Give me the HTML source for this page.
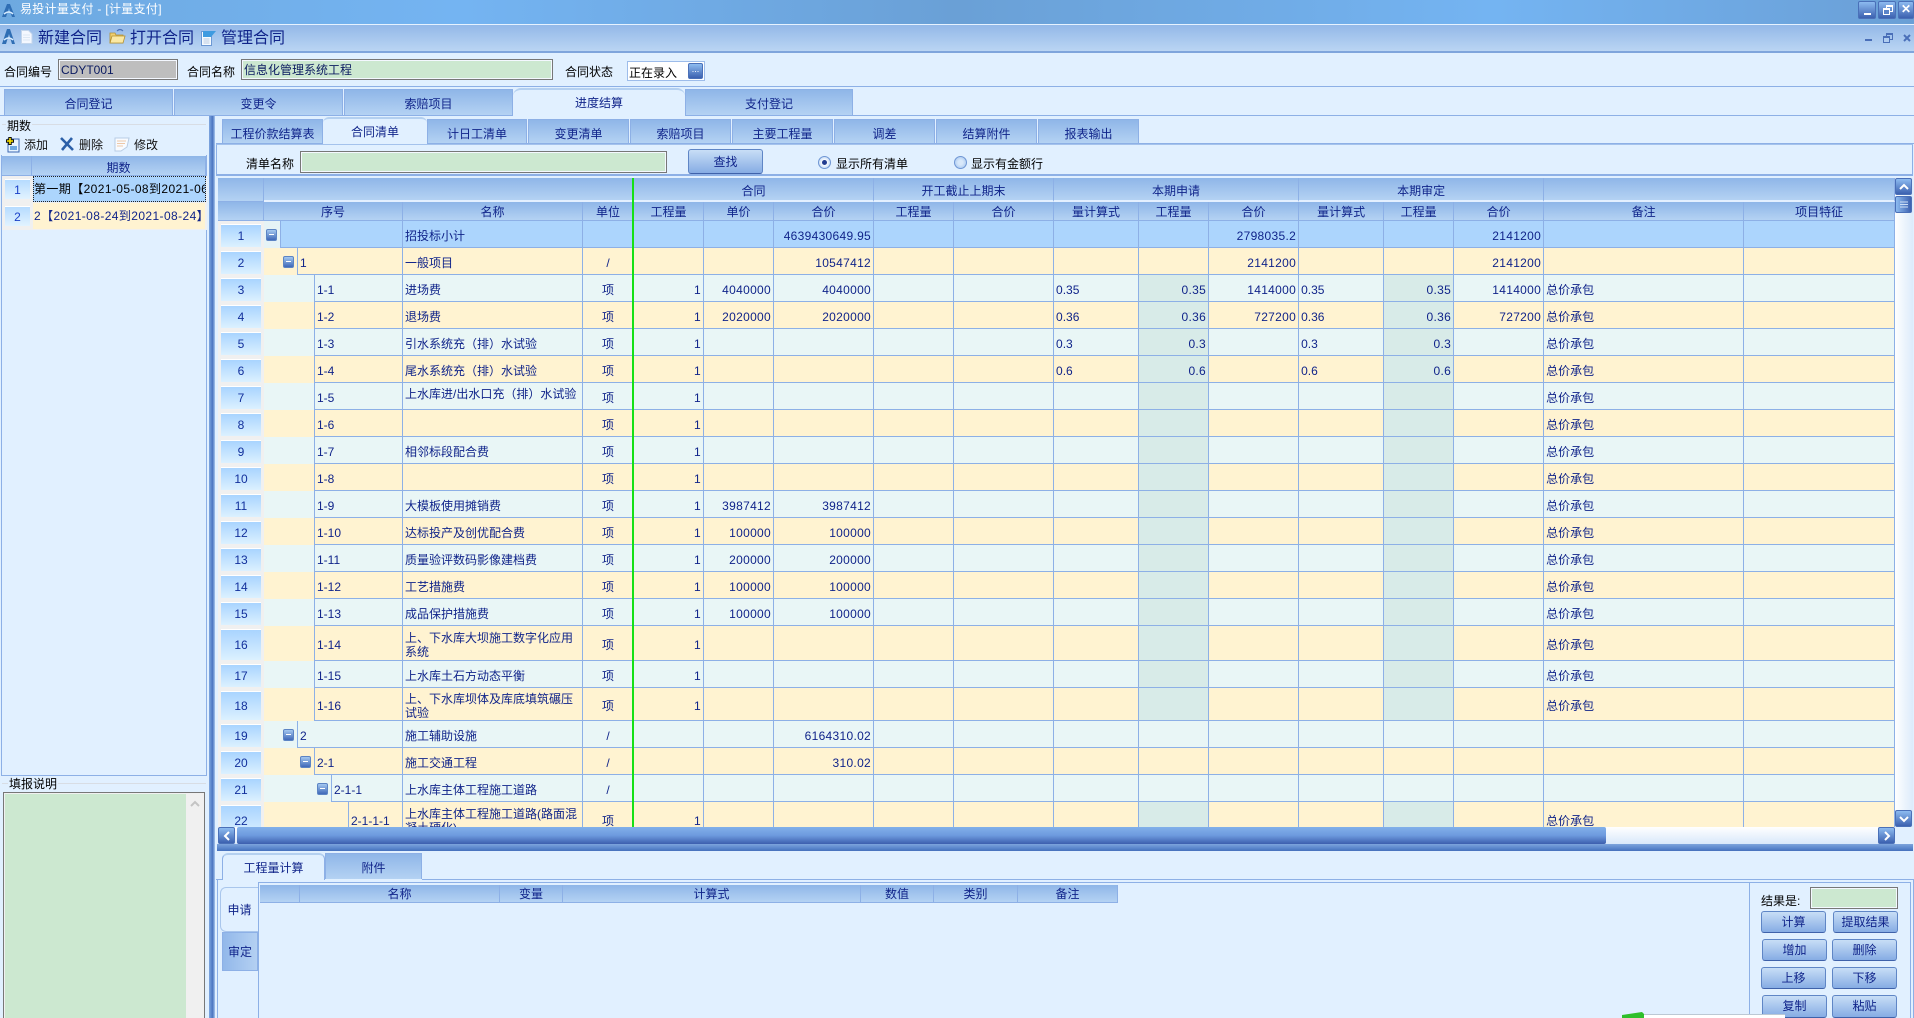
<!DOCTYPE html>
<html lang="zh"><head><meta charset="utf-8"><title>易投计量支付</title>
<style>
*{box-sizing:border-box}
html,body{margin:0;padding:0;width:1914px;height:1018px;overflow:hidden;background:#e1f0ff}
body{position:relative;font:12px/14px "Liberation Sans","WenQuanYi Zen Hei","Noto Sans CJK SC",sans-serif;color:#000}
.a{position:absolute;white-space:nowrap}
.ln{position:absolute;background:#8db0e6}
.inp{position:absolute;border:1px solid #777;outline:1px solid #f4f8ff;outline-offset:-2px;background:#cce8d0;padding:3px 2px 1px;color:#0a1a60}
.tab{position:absolute;top:89px;height:26px;border:1px solid #8db0e6;border-bottom:0;background:linear-gradient(#8fb6e8,#b4d2f3);color:#10248a;text-align:center;line-height:29px}
.st{top:119px;height:24px;line-height:28px}
.act{background:#e1f0ff;border-bottom:0;z-index:2}
.btn{position:absolute;border:1px solid #5f86c6;border-bottom-color:#3f62aa;border-radius:3px;background:linear-gradient(#c8def6,#86ace4);color:#10248a;text-align:center;line-height:21px}
.sb{position:absolute;border-radius:2px;background:linear-gradient(#8dbbf0,#3c61b0);border:1px solid #4a70b8}
#g{position:absolute;left:218px;top:178px;width:1677px;height:649px;overflow:hidden}
table{border-collapse:separate;border-spacing:0;table-layout:fixed;width:1677px}
td,th{padding:3px 2px 0;border-right:1px solid #8db0e6;border-bottom:1px solid #8db0e6;height:27px;overflow:hidden;color:#10248a;font-weight:normal;line-height:14px;white-space:nowrap}
th{background:linear-gradient(#8fb6e8,#b4d2f3);text-align:center;padding:2px 0 0}
tr.h1 th{height:24px;border-bottom:2px solid #e4f0ff;padding-top:4px}
tr.h2 th{height:19px}
tr.o td{background:#e9f6f6}
tr.e td{background:#fff3d1}
tr.b td{background:#acd5fd}
td.r{text-align:right;letter-spacing:.3px}
td.c{text-align:center}
tr td.s{background:#d8ebe8}
tr td.k,tr.h1 th.k,tr.h2 th.k{background:#f0f0f0;border:0;padding:3px 3px 1px 3px}
th.k{background:linear-gradient(#8fb6e8,#b4d2f3)!important;border-right:1px solid #8db0e6!important;border-bottom:1px solid #8db0e6!important}
td.k div{height:100%;border-top:1px solid #fff;background:linear-gradient(#a9d4ff,#dcf1ff);text-align:center;color:#12309c;display:flex;align-items:center;justify-content:center}
td.i{border-bottom:0;text-align:right;padding:1px 3px 0 0;vertical-align:middle;font-size:0;line-height:0}
tr.b td.i{background:#e6f3f6}
.x{display:inline-block;width:11px;height:12px;border-radius:2px;background:linear-gradient(#a4c8f0,#3f68b8);border:1px solid #5c84c4;position:relative;vertical-align:middle}
.x:after{content:"";position:absolute;left:2px;top:4px;width:5px;height:1px;background:#fff}
.col{background:linear-gradient(#8fb6e8,#b4d2f3);border-right:1px solid #8db0e6;border-bottom:1px solid #8db0e6;color:#10248a;text-align:center;line-height:21px;position:absolute}
</style></head><body>

<!-- title bar -->
<div class="a" style="left:0;top:0;width:1914px;height:24px;background:linear-gradient(90deg,#6ea9e0,#74b4f2 24%,#6aa0d6 50%,#74b4f2 78%,#6a9fd6)"></div>
<div class="a" style="left:0;top:24px;width:1914px;height:1px;background:#e6f2ff"></div>
<svg class="a" style="left:1px;top:3px" width="15" height="15" viewBox="0 0 15 15"><path d="M1 14 6 1h3l5 13h-3L8 5 5 14z" fill="#2f6eb4"/><path d="M3 11q5-4 9 0" fill="none" stroke="#d8ecff" stroke-width="1.5"/></svg>
<div class="a" style="left:20px;top:2px;color:#fff;font-size:12px;letter-spacing:.3px">易投计量支付 - [计量支付]</div>
<div class="sb" style="left:1858px;top:1px;width:18px;height:18px"><div class="a" style="left:5px;top:11px;width:7px;height:2px;background:#fff"></div></div>
<div class="sb" style="left:1878px;top:1px;width:18px;height:18px"><div class="a" style="left:7px;top:3px;width:7px;height:7px;border:1px solid #fff;border-top-width:2px"></div><div class="a" style="left:4px;top:6px;width:7px;height:7px;border:1px solid #fff;border-top-width:2px;background:#5c84c8"></div></div>
<div class="sb" style="left:1898px;top:1px;width:16px;height:18px;color:#fff;font-weight:bold;text-align:center;line-height:15px">✕</div>

<!-- menu bar -->
<div class="a" style="left:0;top:25px;width:1914px;height:26px;background:linear-gradient(#93b8e8,#bad5f3)"></div>
<div class="a" style="left:0;top:51px;width:1914px;height:2px;background:#7fa5dc"></div>
<svg class="a" style="left:1px;top:28px" width="15" height="17" viewBox="0 0 15 17"><path d="M1 16 6 1h3l5 15h-3L8 6 5 16z" fill="#2f6eb4"/><path d="M3 12q5-4 9 0" fill="none" stroke="#d8ecff" stroke-width="1.5"/></svg>
<svg class="a" style="left:20px;top:30px" width="13" height="14" viewBox="0 0 13 14"><path d="M1.500.5h7l3.500 3.500v9.500h-10.500z" fill="#f4f8ff" stroke="#c4d6ec"/><path d="M3 5h7M3 7.500h7M3 10h7" stroke="#dde8f4"/></svg>
<svg class="a" style="left:109px;top:28px" width="17" height="16" viewBox="0 0 17 16"><path d="M1 5h5l1 2h7v8H1z" fill="#f0d070" stroke="#b49030" stroke-width=".8"/><path d="M3 8h13l-2 7H1z" fill="#fbe9a4" stroke="#b49030" stroke-width=".8"/><path d="M8 3q3-3 6 0" fill="none" stroke="#4a70b8" stroke-width="1.200"/></svg>
<svg class="a" style="left:200px;top:30px" width="17" height="16" viewBox="0 0 17 16"><path d="M1.500 1.500h10v14h-10z" fill="#f6fbff" stroke="#6c98d4"/><path d="M3 1h13l-5 6H3z" fill="#3f9be0"/><path d="M3.500 9h6M3.500 11h6M3.500 13h6" stroke="#b8c8e0"/></svg>
<div class="a" style="left:38px;top:30px;font-size:16px;line-height:17px;color:#10248a">新建合同</div>
<div class="a" style="left:130px;top:30px;font-size:16px;line-height:17px;color:#10248a">打开合同</div>
<div class="a" style="left:221px;top:30px;font-size:16px;line-height:17px;color:#10248a">管理合同</div>
<div class="a" style="left:1865px;top:39px;width:7px;height:2px;background:#4a6fb8"></div>
<div class="a" style="left:1886px;top:33px;width:7px;height:7px;border:1px solid #4a6fb8;border-top-width:2px"></div>
<div class="a" style="left:1883px;top:36px;width:7px;height:7px;border:1px solid #4a6fb8;border-top-width:2px;background:#b0cdf0"></div>
<svg class="a" style="left:1903px;top:34px" width="8" height="8"><path d="M1 1l6 6M7 1l-6 6" stroke="#4a6fb8" stroke-width="2"/></svg>

<!-- form row -->
<div class="a" style="left:4px;top:65px">合同编号</div>
<div class="inp" style="left:58px;top:59px;width:120px;height:21px;background:#bebebe">CDYT001</div>
<div class="a" style="left:187px;top:65px">合同名称</div>
<div class="inp" style="left:241px;top:59px;width:312px;height:21px">信息化管理系统工程</div>
<div class="a" style="left:565px;top:65px">合同状态</div>
<div class="a" style="left:627px;top:61px;width:78px;height:20px;background:#fff;border:1px solid #9dbcea;padding:4px 1px 0">正在录入</div>
<div class="sb" style="left:688px;top:63px;width:15px;height:16px;color:#fff;line-height:10px;text-align:center;font-size:9px">...</div>
<div class="ln" style="left:0;top:86px;width:1914px;height:1px"></div>

<!-- main tabs -->
<div class="tab" style="left:4px;width:169px">合同登记</div>
<div class="tab" style="left:174px;width:169px">变更令</div>
<div class="tab" style="left:344px;width:169px">索赔项目</div>
<div class="tab act" style="left:513px;top:88px;width:172px;height:28px;border:0;border-top:2px solid #b4d0f0;border-radius:8px 8px 0 0;color:#10248a;line-height:27px">进度结算</div>
<div class="tab" style="left:685px;width:168px">支付登记</div>
<div class="ln" style="left:0;top:115px;width:513px;height:1px"></div>
<div class="ln" style="left:685px;top:115px;width:1229px;height:1px"></div>

<!-- left panel -->
<div class="a" style="left:2px;top:124px;width:204px;height:1px;background:#d8dde4"></div>
<div class="a" style="left:6px;top:119px;background:#e1f0ff;padding:0 1px;">期数</div>
<svg class="a" style="left:6px;top:137px" width="15" height="16" viewBox="0 0 15 16"><path d="M2 2h11v13H2z" fill="#e8f4ff" stroke="#3a66b0"/><path d="M4 9h7v4H4z" fill="#6fa8e0"/><path d="M4 0v8M0 4h8" stroke="#111" stroke-width="3.500"/><path d="M4 1v6M1 4h6" stroke="#ffe800" stroke-width="1.600"/></svg>
<div class="a" style="left:24px;top:138px;color:#111">添加</div>
<svg class="a" style="left:60px;top:137px" width="14" height="14" viewBox="0 0 14 14"><path d="M1 1l12 12M12 1L2 13" stroke="#2c60a8" stroke-width="2.600"/></svg>
<div class="a" style="left:79px;top:138px;color:#111">删除</div>
<svg class="a" style="left:114px;top:137px" width="16" height="15" viewBox="0 0 16 15"><path d="M1 1h14l-2 9-6 4H1z" fill="#f8fbff" stroke="#b8cce4"/><path d="M3 4h9M3 6.500h8M3 9h6" stroke="#eec8a8"/></svg>
<div class="a" style="left:134px;top:138px;color:#111">修改</div>

<div class="a" style="left:1px;top:155px;width:206px;height:621px;border:1px solid #8db0e6;border-top:0"></div>
<div class="col" style="left:2px;top:156px;width:30px;height:20px"></div>
<div class="col" style="left:32px;top:156px;width:174px;height:20px;line-height:24px">期数</div>
<div class="a" style="left:2px;top:176px;width:205px;height:54px;background:#f0f0f0"></div>
<div class="a" style="left:5px;top:179px;width:25px;height:20px;background:linear-gradient(#b6dbff,#e2f3ff);border-top:1px solid #fff;color:#1a40c8;text-align:center;line-height:20px">1</div>
<div class="a" style="left:33px;top:176px;width:173px;height:26px;background:#acd5fd;border:1px dotted #222;line-height:24px;overflow:hidden;padding-left:0;color:#000;letter-spacing:.4px">第一期【2021-05-08到2021-06</div>
<div class="a" style="left:5px;top:206px;width:25px;height:20px;background:linear-gradient(#b6dbff,#e2f3ff);border-top:1px solid #fff;color:#1a40c8;text-align:center;line-height:20px">2</div>
<div class="a" style="left:33px;top:203px;width:172px;height:26px;background:#fff3d1;line-height:26px;padding-left:1px;overflow:hidden;color:#10248a;letter-spacing:.4px">2【2021-08-24到2021-08-24】</div>

<div class="a" style="left:2px;top:783px;width:204px;height:1px;background:#d8dde4"></div>
<div class="a" style="left:8px;top:777px;background:#e1f0ff;padding:0 1px">填报说明</div>
<div class="a" style="left:3px;top:792px;width:202px;height:226px;border:1px solid #777;background:#f0f0f0;border-bottom:0"></div>
<div class="a" style="left:5px;top:794px;width:181px;height:224px;background:#cce8d0"></div>
<svg class="a" style="left:190px;top:800px" width="10" height="7"><path d="M1 6l4-4 4 4" fill="none" stroke="#c4c4c4" stroke-width="2"/></svg>

<!-- vertical splitter -->
<div class="a" style="left:209px;top:116px;width:6px;height:902px;background:linear-gradient(90deg,#7fa8e0,#4a74c0 60%,#a8c6ee)"></div>

<!-- sub tabs -->
<div class="tab st" style="left:222px;width:101px">工程价款结算表</div>
<div class="tab st act" style="left:323px;top:117px;width:104px;height:27px;border:0;border-top:2px solid #b4d0f0;border-radius:6px 6px 0 0;line-height:27px">合同清单</div>
<div class="tab st" style="left:427px;width:100px">计日工清单</div>
<div class="tab st" style="left:528px;width:101px">变更清单</div>
<div class="tab st" style="left:630px;width:101px">索赔项目</div>
<div class="tab st" style="left:732px;width:101px">主要工程量</div>
<div class="tab st" style="left:834px;width:101px">调差</div>
<div class="tab st" style="left:936px;width:101px">结算附件</div>
<div class="tab st" style="left:1038px;width:101px">报表输出</div>
<div class="ln" style="left:216px;top:143px;width:107px;height:1px"></div>
<div class="ln" style="left:427px;top:143px;width:1487px;height:1px"></div>
<div class="a" style="left:216px;top:144px;width:1697px;height:32px;border:1px solid #8db0e6;border-bottom:2px solid #8db0e6;border-top:1px solid #a4c2ec"></div>

<!-- search row -->
<div class="a" style="left:246px;top:157px">清单名称</div>
<div class="inp" style="left:300px;top:151px;width:367px;height:22px"></div>
<div class="btn" style="left:688px;top:149px;width:75px;height:25px;line-height:24px">查找</div>
<div class="a" style="left:818px;top:156px;width:13px;height:13px;border-radius:50%;background:radial-gradient(#fff 30%,#a4c6f0);border:1px solid #6f96d4"><div class="a" style="left:3px;top:3px;width:5px;height:5px;border-radius:50%;background:#223c90"></div></div>
<div class="a" style="left:836px;top:157px">显示所有清单</div>
<div class="a" style="left:954px;top:156px;width:13px;height:13px;border-radius:50%;background:radial-gradient(#d8e8fa 30%,#9cc0ee);border:1px solid #6f96d4"></div>
<div class="a" style="left:971px;top:157px">显示有金额行</div>

<!-- grid -->
<div id="g"><table style="width:1677px">
<colgroup><col width="46"><col width="17"><col width="17"><col width="17"><col width="17"><col width="17"><col width="54"><col width="180"><col width="51"><col width="70"><col width="70"><col width="100"><col width="80"><col width="100"><col width="85"><col width="70"><col width="90"><col width="85"><col width="70"><col width="90"><col width="200"><col width="151"></colgroup>
<tr class="h1"><th class="k"></th><th colspan="8"></th><th colspan="3">合同</th><th colspan="2">开工截止上期末</th><th colspan="3">本期申请</th><th colspan="3">本期审定</th><th colspan="2"></th></tr>
<tr class="h2"><th class="k"></th><th colspan="6">序号</th><th>名称</th><th>单位</th><th>工程量</th><th>单价</th><th>合价</th><th>工程量</th><th>合价</th><th>量计算式</th><th>工程量</th><th>合价</th><th>量计算式</th><th>工程量</th><th>合价</th><th>备注</th><th>项目特征</th></tr>

<tr class="b"><td class="k"><div>1</div></td><td class="i"><span class="x"></span></td><td colspan="5"></td><td>招投标小计</td><td class="c"></td><td></td><td></td><td class="r">4639430649.95</td><td></td><td></td><td></td><td></td><td class="r">2798035.2</td><td></td><td></td><td class="r">2141200</td><td></td><td></td></tr>
<tr class="e"><td class="k"><div>2</div></td><td class="i" colspan="2"><span class="x"></span></td><td colspan="4">1</td><td>一般项目</td><td class="c">/</td><td></td><td></td><td class="r">10547412</td><td></td><td></td><td></td><td></td><td class="r">2141200</td><td></td><td></td><td class="r">2141200</td><td></td><td></td></tr>
<tr class="o"><td class="k"><div>3</div></td><td class="i" colspan="3"></td><td colspan="3">1-1</td><td>进场费</td><td class="c">项</td><td class="r">1</td><td class="r">4040000</td><td class="r">4040000</td><td></td><td></td><td>0.35</td><td class="r s">0.35</td><td class="r">1414000</td><td>0.35</td><td class="r s">0.35</td><td class="r">1414000</td><td>总价承包</td><td></td></tr>
<tr class="e"><td class="k"><div>4</div></td><td class="i" colspan="3"></td><td colspan="3">1-2</td><td>退场费</td><td class="c">项</td><td class="r">1</td><td class="r">2020000</td><td class="r">2020000</td><td></td><td></td><td>0.36</td><td class="r s">0.36</td><td class="r">727200</td><td>0.36</td><td class="r s">0.36</td><td class="r">727200</td><td>总价承包</td><td></td></tr>
<tr class="o"><td class="k"><div>5</div></td><td class="i" colspan="3"></td><td colspan="3">1-3</td><td>引水系统充（排）水试验</td><td class="c">项</td><td class="r">1</td><td></td><td></td><td></td><td></td><td>0.3</td><td class="r s">0.3</td><td></td><td>0.3</td><td class="r s">0.3</td><td></td><td>总价承包</td><td></td></tr>
<tr class="e"><td class="k"><div>6</div></td><td class="i" colspan="3"></td><td colspan="3">1-4</td><td>尾水系统充（排）水试验</td><td class="c">项</td><td class="r">1</td><td></td><td></td><td></td><td></td><td>0.6</td><td class="r s">0.6</td><td></td><td>0.6</td><td class="r s">0.6</td><td></td><td>总价承包</td><td></td></tr>
<tr class="o"><td class="k"><div>7</div></td><td class="i" colspan="3"></td><td colspan="3">1-5</td><td><span style="position:relative;top:-4px">上水库进/出水口充（排）水试验</span></td><td class="c">项</td><td class="r">1</td><td></td><td></td><td></td><td></td><td></td><td class="s"></td><td></td><td></td><td class="s"></td><td></td><td>总价承包</td><td></td></tr>
<tr class="e"><td class="k"><div>8</div></td><td class="i" colspan="3"></td><td colspan="3">1-6</td><td></td><td class="c">项</td><td class="r">1</td><td></td><td></td><td></td><td></td><td></td><td class="s"></td><td></td><td></td><td class="s"></td><td></td><td>总价承包</td><td></td></tr>
<tr class="o"><td class="k"><div>9</div></td><td class="i" colspan="3"></td><td colspan="3">1-7</td><td>相邻标段配合费</td><td class="c">项</td><td class="r">1</td><td></td><td></td><td></td><td></td><td></td><td class="s"></td><td></td><td></td><td class="s"></td><td></td><td>总价承包</td><td></td></tr>
<tr class="e"><td class="k"><div>10</div></td><td class="i" colspan="3"></td><td colspan="3">1-8</td><td></td><td class="c">项</td><td class="r">1</td><td></td><td></td><td></td><td></td><td></td><td class="s"></td><td></td><td></td><td class="s"></td><td></td><td>总价承包</td><td></td></tr>
<tr class="o"><td class="k"><div>11</div></td><td class="i" colspan="3"></td><td colspan="3">1-9</td><td>大模板使用摊销费</td><td class="c">项</td><td class="r">1</td><td class="r">3987412</td><td class="r">3987412</td><td></td><td></td><td></td><td class="s"></td><td></td><td></td><td class="s"></td><td></td><td>总价承包</td><td></td></tr>
<tr class="e"><td class="k"><div>12</div></td><td class="i" colspan="3"></td><td colspan="3">1-10</td><td>达标投产及创优配合费</td><td class="c">项</td><td class="r">1</td><td class="r">100000</td><td class="r">100000</td><td></td><td></td><td></td><td class="s"></td><td></td><td></td><td class="s"></td><td></td><td>总价承包</td><td></td></tr>
<tr class="o"><td class="k"><div>13</div></td><td class="i" colspan="3"></td><td colspan="3">1-11</td><td>质量验评数码影像建档费</td><td class="c">项</td><td class="r">1</td><td class="r">200000</td><td class="r">200000</td><td></td><td></td><td></td><td class="s"></td><td></td><td></td><td class="s"></td><td></td><td>总价承包</td><td></td></tr>
<tr class="e"><td class="k"><div>14</div></td><td class="i" colspan="3"></td><td colspan="3">1-12</td><td>工艺措施费</td><td class="c">项</td><td class="r">1</td><td class="r">100000</td><td class="r">100000</td><td></td><td></td><td></td><td class="s"></td><td></td><td></td><td class="s"></td><td></td><td>总价承包</td><td></td></tr>
<tr class="o"><td class="k"><div>15</div></td><td class="i" colspan="3"></td><td colspan="3">1-13</td><td>成品保护措施费</td><td class="c">项</td><td class="r">1</td><td class="r">100000</td><td class="r">100000</td><td></td><td></td><td></td><td class="s"></td><td></td><td></td><td class="s"></td><td></td><td>总价承包</td><td></td></tr>
<tr class="e"><td class="k" style="height:35px"><div>16</div></td><td class="i" colspan="3"></td><td colspan="3">1-14</td><td>上、下水库大坝施工数字化应用<br>系统</td><td class="c">项</td><td class="r">1</td><td></td><td></td><td></td><td></td><td></td><td class="s"></td><td></td><td></td><td class="s"></td><td></td><td>总价承包</td><td></td></tr>
<tr class="o"><td class="k"><div>17</div></td><td class="i" colspan="3"></td><td colspan="3">1-15</td><td>上水库土石方动态平衡</td><td class="c">项</td><td class="r">1</td><td></td><td></td><td></td><td></td><td></td><td class="s"></td><td></td><td></td><td class="s"></td><td></td><td>总价承包</td><td></td></tr>
<tr class="e"><td class="k" style="height:33px"><div>18</div></td><td class="i" colspan="3"></td><td colspan="3">1-16</td><td>上、下水库坝体及库底填筑碾压<br>试验</td><td class="c">项</td><td class="r">1</td><td></td><td></td><td></td><td></td><td></td><td class="s"></td><td></td><td></td><td class="s"></td><td></td><td>总价承包</td><td></td></tr>
<tr class="o"><td class="k"><div>19</div></td><td class="i" colspan="2"><span class="x"></span></td><td colspan="4">2</td><td>施工辅助设施</td><td class="c">/</td><td></td><td></td><td class="r">6164310.02</td><td></td><td></td><td></td><td></td><td></td><td></td><td></td><td></td><td></td><td></td></tr>
<tr class="e"><td class="k"><div>20</div></td><td class="i" colspan="3"><span class="x"></span></td><td colspan="3">2-1</td><td>施工交通工程</td><td class="c">/</td><td></td><td></td><td class="r">310.02</td><td></td><td></td><td></td><td></td><td></td><td></td><td></td><td></td><td></td><td></td></tr>
<tr class="o"><td class="k"><div>21</div></td><td class="i" colspan="4"><span class="x"></span></td><td colspan="2">2-1-1</td><td>上水库主体工程施工道路</td><td class="c">/</td><td></td><td></td><td></td><td></td><td></td><td></td><td></td><td></td><td></td><td></td><td></td><td></td><td></td></tr>
<tr class="e"><td class="k" style="height:35px"><div>22</div></td><td class="i" colspan="5"></td><td>2-1-1-1</td><td>上水库主体工程施工道路(路面混<br>凝土硬化)</td><td class="c">项</td><td class="r">1</td><td></td><td></td><td></td><td></td><td></td><td class="s"></td><td></td><td></td><td class="s"></td><td></td><td>总价承包</td><td></td></tr>
</table></div>
<div class="a" style="left:632px;top:178px;width:2px;height:649px;background:#16e016"></div>

<!-- grid scrollbars -->
<div class="a" style="left:1895px;top:178px;width:18px;height:649px;background:linear-gradient(90deg,#fff,#dcebfb)"></div>
<div class="sb" style="left:1895px;top:178px;width:17px;height:17px"><svg class="a" style="left:3px;top:4px" width="10" height="7"><path d="M1 6l4-4 4 4" fill="none" stroke="#fff" stroke-width="2"/></svg></div>
<div class="sb" style="left:1895px;top:196px;width:17px;height:17px;background:linear-gradient(90deg,#8dbbf0,#3c61b0)"><svg class="a" style="left:4px;top:4px" width="8" height="7"><path d="M0 1h8M0 3.500h8M0 6h8" stroke="#cfe0f6"/></svg></div>
<div class="sb" style="left:1895px;top:810px;width:17px;height:17px"><svg class="a" style="left:3px;top:5px" width="10" height="7"><path d="M1 1l4 4 4-4" fill="none" stroke="#fff" stroke-width="2"/></svg></div>
<div class="a" style="left:218px;top:827px;width:1677px;height:17px;background:linear-gradient(#fff,#d8e8fa)"></div>
<div class="sb" style="left:218px;top:827px;width:17px;height:17px"><svg class="a" style="left:4px;top:3px" width="7" height="10"><path d="M6 1L2 5l4 4" fill="none" stroke="#fff" stroke-width="2"/></svg></div>
<div class="a" style="left:237px;top:827px;width:1369px;height:17px;border-radius:2px;background:linear-gradient(#82b0ea,#6d9ade 50%,#3c5eae)"></div>
<div class="sb" style="left:1878px;top:827px;width:17px;height:17px"><svg class="a" style="left:5px;top:3px" width="7" height="10"><path d="M1 1l4 4-4 4" fill="none" stroke="#fff" stroke-width="2"/></svg></div>
<div class="a" style="left:217px;top:844px;width:1696px;height:7px;background:linear-gradient(#7da4dc,#5a86cc 60%,#4570bc)"></div>

<!-- bottom tabs -->
<div class="tab" style="left:222px;top:853px;width:103px;height:27px;background:#e1f0ff;border-top:2px solid #b4d0f0;border-radius:6px 6px 0 0;line-height:26px;z-index:2;border-bottom:0">工程量计算</div>
<div class="tab" style="left:325px;top:853px;width:97px;height:26px;line-height:28px">附件</div>
<div class="ln" style="left:216px;top:879px;width:6px;height:1px"></div>
<div class="ln" style="left:422px;top:879px;width:1491px;height:1px"></div>
<div class="ln" style="left:258px;top:882px;width:1652px;height:1px"></div>
<div class="ln" style="left:1910px;top:882px;width:1px;height:136px"></div>
<div class="ln" style="left:1913px;top:879px;width:1px;height:139px"></div>
<div class="ln" style="left:258px;top:882px;width:1px;height:136px"></div>
<div class="ln" style="left:217px;top:880px;width:1px;height:138px"></div>

<!-- side tabs -->
<div class="a" style="left:220px;top:887px;width:38px;height:45px;border:1px solid #a9c6ec;border-right:0;border-radius:6px 0 0 6px;color:#10248a;text-align:center;line-height:44px;background:#e1f0ff">申请</div>
<div class="a" style="left:222px;top:932px;width:36px;height:39px;border:1px solid #8db0e6;background:linear-gradient(90deg,#92b8ea,#b4d0f2);color:#10248a;text-align:center;line-height:38px">审定</div>

<!-- bottom grid header -->
<div class="col" style="left:260px;top:885px;width:40px;height:18px"></div>
<div class="col" style="left:300px;top:885px;width:200px;height:18px;line-height:19px">名称</div>
<div class="col" style="left:500px;top:885px;width:63px;height:18px;line-height:19px">变量</div>
<div class="col" style="left:563px;top:885px;width:298px;height:18px;line-height:19px">计算式</div>
<div class="col" style="left:861px;top:885px;width:73px;height:18px;line-height:19px">数值</div>
<div class="col" style="left:934px;top:885px;width:84px;height:18px;line-height:19px">类别</div>
<div class="col" style="left:1018px;top:885px;width:100px;height:18px;line-height:19px">备注</div>

<!-- right buttons -->
<div class="ln" style="left:1749px;top:883px;width:1px;height:135px"></div>
<div class="a" style="left:1761px;top:894px">结果是:</div>
<div class="inp" style="left:1810px;top:887px;width:88px;height:22px"></div>
<div class="btn" style="left:1761px;top:911px;width:65px;height:22px">计算</div>
<div class="btn" style="left:1833px;top:911px;width:65px;height:22px">提取结果</div>
<div class="btn" style="left:1762px;top:939px;width:65px;height:22px">增加</div>
<div class="btn" style="left:1832px;top:939px;width:65px;height:22px">删除</div>
<div class="btn" style="left:1761px;top:967px;width:65px;height:22px">上移</div>
<div class="btn" style="left:1832px;top:967px;width:65px;height:22px">下移</div>
<div class="btn" style="left:1762px;top:995px;width:65px;height:23px">复制</div>
<div class="btn" style="left:1832px;top:995px;width:65px;height:23px">粘贴</div>
<svg class="a" style="left:1621px;top:1011px" width="24" height="7" viewBox="0 0 24 7"><path d="M1 7V4l20-3 2 2v4z" fill="#2fbf2a"/></svg>
<div class="a" style="left:1644px;top:1014px;width:141px;height:4px;background:#fff;border-top:1px solid #bcc8d4"></div>
</body></html>
